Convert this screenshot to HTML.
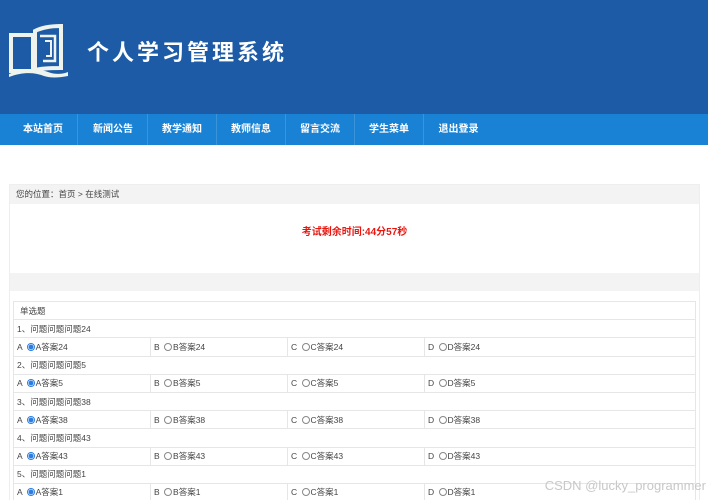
<!DOCTYPE html>
<html style="width:708px;height:500px;overflow:hidden"><head><meta charset="utf-8"><style>
*{margin:0;padding:0;box-sizing:border-box}
body{width:708px;height:500px;overflow:hidden;background:#fff;font-family:"Liberation Sans","Noto Sans CJK SC",sans-serif;position:relative}
.hd{position:absolute;left:0;top:0;width:708px;height:114px;background:#1e5ba6}
.title{position:absolute;left:87px;top:38px;color:#fff;font-size:22px;font-weight:bold;letter-spacing:3px;line-height:30px}
.nav{position:absolute;left:0;top:114px;width:708px;height:31px;background:#1982d4}
.nav div{position:absolute;top:0;height:31px;line-height:31px;color:#fff;font-size:10px;font-weight:bold;text-align:center;width:69px;border-right:1px solid #3b93d8}
.panel{position:absolute;left:9px;top:184px;width:691px;height:330px;border:1px solid #eee;background:#fff}
.bc{height:19px;background:#f3f3f3;font-size:8.5px;color:#444;line-height:19px;padding-left:6px}
.timer{height:69px;text-align:center;color:#e8160f;font-weight:bold;font-size:10px;line-height:58px}
.gray{height:18px;background:#f3f3f3}
table{position:absolute;left:3px;top:116px;width:683px;border-collapse:collapse;font-size:8.5px;color:#444}
td{border:1px solid #e6e6e6;height:18.2px;padding:0 0 0 3px;white-space:nowrap}
td.c{width:137px}
.r{display:inline-block;width:8px;height:8px;border:1px solid #888;border-radius:50%;vertical-align:-1px;margin:0 1px 0 2px}
.r.on{border-color:#2a7de1;background:radial-gradient(circle,#2a7de1 0 2.2px,#fff 2.6px)}
.wm{position:absolute;right:2px;top:478px;font-size:13px;color:#c8c8c8}
</style></head><body>
<div class="hd">
<svg style="position:absolute;left:8px;top:24px" width="62" height="54" viewBox="0 0 62 54">
<path d="M3 11 H25 V47 H3 Z" fill="none" stroke="#eef3ee" stroke-width="4"/>
<path d="M27 7 C35 3 45 2 53 2 V44 C45 44 35 44 27 46 Z" fill="none" stroke="#eef3ee" stroke-width="4"/>
<path d="M32 12 H47 V37 H35" fill="none" stroke="#eef3ee" stroke-width="2.5"/>
<path d="M37 17 H43 V32 H38" fill="none" stroke="#eef3ee" stroke-width="2"/>
<path d="M1 50 C15 44 30 44 40 48 C48 51 55 50 60 48 V52 C50 54 42 54 36 52 C26 48 14 48 1 53 Z" fill="#eef3ee"/>
</svg>
<div class="title">个人学习管理系统</div>
</div>
<div class="nav">
<div style="left:9px">本站首页</div><div style="left:79px">新闻公告</div><div style="left:148px">教学通知</div><div style="left:217px">教师信息</div><div style="left:286px">留言交流</div><div style="left:355px">学生菜单</div><div style="left:424px;border:0">退出登录</div>
</div>
<div class="panel">
<div class="bc">您的位置：首页 &gt; 在线测试</div>
<div class="timer">考试剩余时间:44分57秒</div>
<div class="gray"></div>
<table>
<tr><td colspan="4" style="padding-left:6px">单选题</td></tr>
<tr><td colspan="4">1、问题问题问题24</td></tr>
<tr><td class="c">A <span class="r on"></span>A答案24</td><td class="c">B <span class="r"></span>B答案24</td><td class="c">C <span class="r"></span>C答案24</td><td>D <span class="r"></span>D答案24</td></tr>
<tr><td colspan="4">2、问题问题问题5</td></tr>
<tr><td class="c">A <span class="r on"></span>A答案5</td><td class="c">B <span class="r"></span>B答案5</td><td class="c">C <span class="r"></span>C答案5</td><td>D <span class="r"></span>D答案5</td></tr>
<tr><td colspan="4">3、问题问题问题38</td></tr>
<tr><td class="c">A <span class="r on"></span>A答案38</td><td class="c">B <span class="r"></span>B答案38</td><td class="c">C <span class="r"></span>C答案38</td><td>D <span class="r"></span>D答案38</td></tr>
<tr><td colspan="4">4、问题问题问题43</td></tr>
<tr><td class="c">A <span class="r on"></span>A答案43</td><td class="c">B <span class="r"></span>B答案43</td><td class="c">C <span class="r"></span>C答案43</td><td>D <span class="r"></span>D答案43</td></tr>
<tr><td colspan="4">5、问题问题问题1</td></tr>
<tr><td class="c">A <span class="r on"></span>A答案1</td><td class="c">B <span class="r"></span>B答案1</td><td class="c">C <span class="r"></span>C答案1</td><td>D <span class="r"></span>D答案1</td></tr>
</table>
</div>
<div class="wm">CSDN @lucky_programmer</div>
</body></html>
